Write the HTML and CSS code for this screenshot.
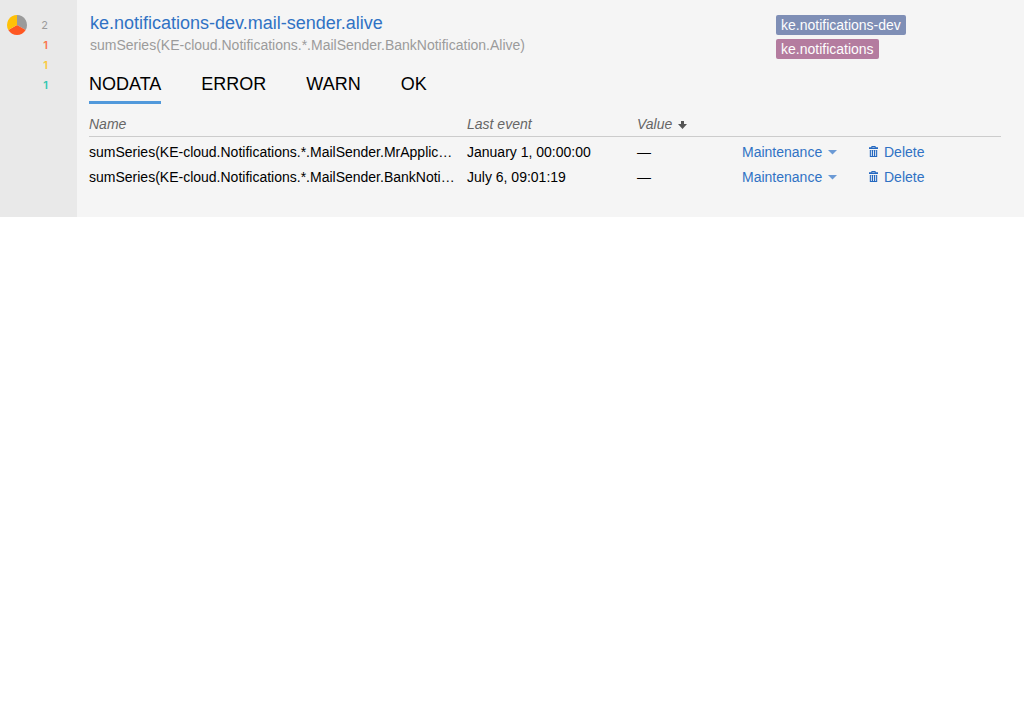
FILE: index.html
```html
<!DOCTYPE html>
<html lang="en">
<head>
<meta charset="utf-8">
<title>ke.notifications-dev.mail-sender.alive</title>
<link rel="stylesheet" href="styles.css">
</head>
<body>
<article class="trigger">
  <aside class="state">
    <svg class="pie" viewBox="0 0 20 20"><path fill="#9b9b9b" d="M10 10V0A10 10 0 0 1 18.66 15Z"/><path fill="#ff5722" d="M10 10L18.66 15A10 10 0 0 1 1.34 15Z"/><path fill="#ffc107" d="M10 10L1.34 15A10 10 0 0 1 10 0Z"/></svg>
    <div class="counters"><span class="nodata">2</span><span class="error">1</span><span class="warn">1</span><span class="ok">1</span></div>
  </aside>
  <main class="data">
    <header class="header">
      <div class="info">
        <a class="name">ke.notifications-dev.mail-sender.alive</a>
        <div class="target">sumSeries(KE-cloud.Notifications.*.MailSender.BankNotification.Alive)</div>
      </div>
      <div class="tags"><span class="tag tag-blue">ke.notifications-dev</span><span class="tag tag-pink">ke.notifications</span></div>
    </header>
    <nav class="tabs"><a class="tab active">NODATA</a><a class="tab">ERROR</a><a class="tab">WARN</a><a class="tab">OK</a></nav>
    <section class="table">
      <div class="row head"><div>Name</div><div>Last event</div><div>Value <svg class="sort" viewBox="0 0 9 8"><path d="M3 0h3v3h3L4.5 8 0 3h3z"/></svg></div></div>
      <div class="row">
        <div class="metric">sumSeries(KE-cloud.Notifications.*.MailSender.MrApplic…</div><div>January 1, 00:00:00</div><div>—</div>
        <a class="link">Maintenance<svg class="caret" viewBox="0 0 9 5"><path d="M0 0h9L4.5 4.6z"/></svg></a>
        <a class="link"><svg class="trash" viewBox="0 0 9 11"><path fill-rule="evenodd" d="M2.4 0h4.2v1.2H9V3H0V1.2h2.4zM3.3.9v.5h2.4V.9zM.8 4h7.4v7H.8zM1.9 4.2V10h.9V4.2zM4.05 4.2V10h.9V4.2zM6.2 4.2V10h.9V4.2z"/></svg>Delete</a>
      </div>
      <div class="row">
        <div class="metric">sumSeries(KE-cloud.Notifications.*.MailSender.BankNoti…</div><div>July 6, 09:01:19</div><div>—</div>
        <a class="link">Maintenance<svg class="caret" viewBox="0 0 9 5"><path d="M0 0h9L4.5 4.6z"/></svg></a>
        <a class="link"><svg class="trash" viewBox="0 0 9 11"><path fill-rule="evenodd" d="M2.4 0h4.2v1.2H9V3H0V1.2h2.4zM3.3.9v.5h2.4V.9zM.8 4h7.4v7H.8zM1.9 4.2V10h.9V4.2zM4.05 4.2V10h.9V4.2zM6.2 4.2V10h.9V4.2z"/></svg>Delete</a>
      </div>
    </section>
  </main>
</article>
</body>
</html>
```
FILE: styles.css
```css
* { box-sizing: border-box; }
body { margin: 0; background: #fff; font: 14px/20px "Liberation Sans", Arial, sans-serif; color: #000; }
.trigger { display: flex; height: 217px; background: #f5f5f5; }
.state { display: flex; justify-content: space-between; width: 77px; padding: 15px 29px 0 7px; background: #e9e9e9; }
.pie { width: 20px; height: 20px; }
.counters { display: flex; flex-direction: column; align-items: flex-end; font: 11px/20px Inter, sans-serif; }
.nodata { color: #9b9b9b; }
.error, .warn, .ok { font-weight: 600; opacity: .8; }
.error { color: #ff5722; }
.warn { color: #ffc107; }
.ok { color: #00bfa5; }
.data { width: 924px; padding: 12px 0 0 12px; }
.header { display: flex; height: 54px; }
.info { width: 687px; padding-left: 1px; }
.name { display: block; font-size: 18px; line-height: 22px; color: #3072c4; }
.target { margin-top: 1px; color: #9b9b9b; }
.tags { display: flex; flex-direction: column; align-items: flex-start; gap: 4px; padding-top: 3px; }
.tag { padding: 0 5px; border-radius: 2px; color: #fff; opacity: .9; }
.tag-blue { background: #7384b0; }
.tag-pink { background: #ad7096; }
.tabs { display: flex; gap: 40px; height: 38px; }
.tab { height: 38px; padding-top: 6px; font-size: 18px; line-height: 24px; }
.active { border-bottom: 3px solid #5199db; }
.table { padding-top: 10px; }
.row { display: grid; grid-template-columns: 378px 170px 105px 127px 1fr; height: 25px; line-height: 20px; }
.head { height: 23px; margin-bottom: 5px; border-bottom: 1px solid #ccc; color: #666; font-style: italic; }
.sort { width: 9px; height: 8px; margin-left: 2px; fill: #555; }
.metric { width: 368px; white-space: nowrap; }
.link { color: #3072c4; }
.caret { width: 9px; height: 5px; margin-left: 6px; fill: #6b9ad5; vertical-align: 2px; }
.trash { width: 9px; height: 11px; margin-right: 6px; fill: #2468c0; }
```
